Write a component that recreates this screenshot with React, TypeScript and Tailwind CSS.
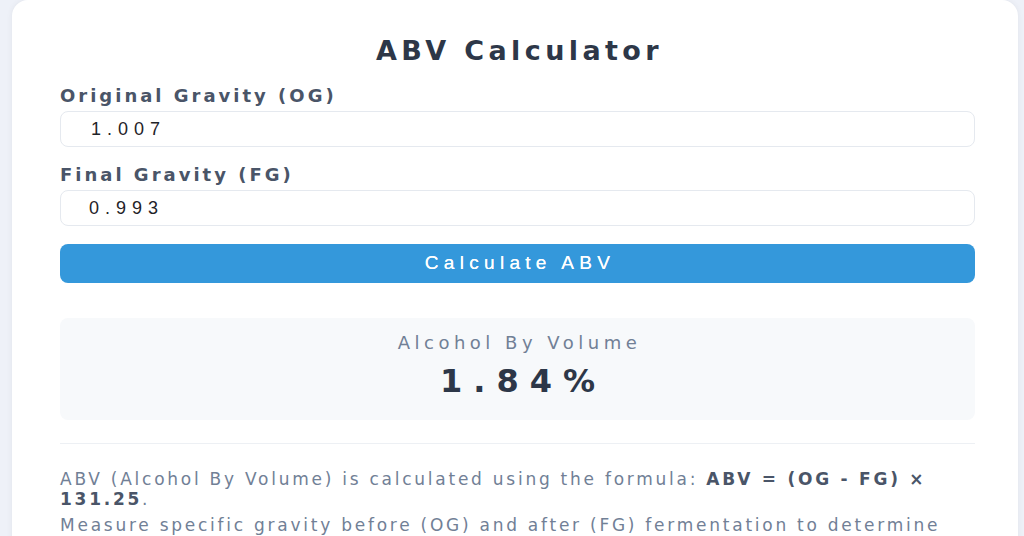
import React from "react";

export default function App() {
  return (
    <div className="h-[536px] w-[1024px] overflow-hidden bg-[#eef1f8]">
      <div className="ml-[12px] w-[1006px] rounded-t-[16px] bg-white pl-[48px] pr-[43px] pt-[33px] pb-[40px] shadow-[0_0_6px_rgba(0,0,0,0.06)] font-['DejaVu_Sans',sans-serif]">
        <h1 className="text-center text-[27px] leading-[36px] font-bold tracking-[4.4px] pl-[4px] text-[#2d3748]">
          ABV Calculator
        </h1>

        <label className="mt-[15px] block text-[18px] leading-[24px] font-bold tracking-[3px] text-[#4a5568]">
          Original Gravity (OG)
        </label>
        <div className="mt-[3px] flex h-[36px] items-center rounded-[8px] border border-[#e5e9ef] bg-white pl-[30px] font-['Liberation_Sans',sans-serif] text-[18px] tracking-[6px] text-[#1f2328]">
          1.007
        </div>

        <label className="mt-[16px] block text-[18px] leading-[24px] font-bold tracking-[3px] text-[#4a5568]">
          Final Gravity (FG)
        </label>
        <div className="mt-[3px] flex h-[36px] items-center rounded-[8px] border border-[#e5e9ef] bg-white pl-[28px] font-['Liberation_Sans',sans-serif] text-[18px] tracking-[6px] text-[#1f2328]">
          0.993
        </div>

        <button className="mt-[18px] flex h-[39px] w-full items-center justify-center rounded-[8px] bg-[#3498db] pl-[5px] font-['Liberation_Sans',sans-serif] text-[19px] tracking-[5.3px] text-white [text-shadow:0_0_0.4px_#fff]">
          Calculate ABV
        </button>

        <div className="mt-[35px] flex h-[102px] flex-col items-center rounded-[8px] bg-[#f7f9fb] pt-[13px]">
          <div className="pl-[4px] text-[18px] leading-[24px] tracking-[4.5px] text-[#718096]">
            Alcohol By Volume
          </div>
          <div className="mt-[5px] pl-[11px] text-[32px] leading-[42px] font-bold tracking-[11px] text-[#2d3748]">
            1.84%
          </div>
        </div>

        <div className="mt-[23px] h-px bg-[#edf0f4]" />

        <p className="mt-[25px] text-[17px] leading-[20px] tracking-[2.75px] text-[#718096]">
          ABV (Alcohol By Volume) is calculated using the formula:{" "}
          <strong className="font-bold text-[#4a5568]">ABV = (OG - FG) ×</strong>{" "}
          <strong className="font-bold text-[#4a5568]">131.25</strong>.
        </p>
        <p className="mt-[6px] text-[17px] leading-[20px] tracking-[2.75px] text-[#718096]">
          Measure specific gravity before (OG) and after (FG) fermentation to determine the alcohol content of your beer, wine or cider.
        </p>
      </div>
    </div>
  );
}
